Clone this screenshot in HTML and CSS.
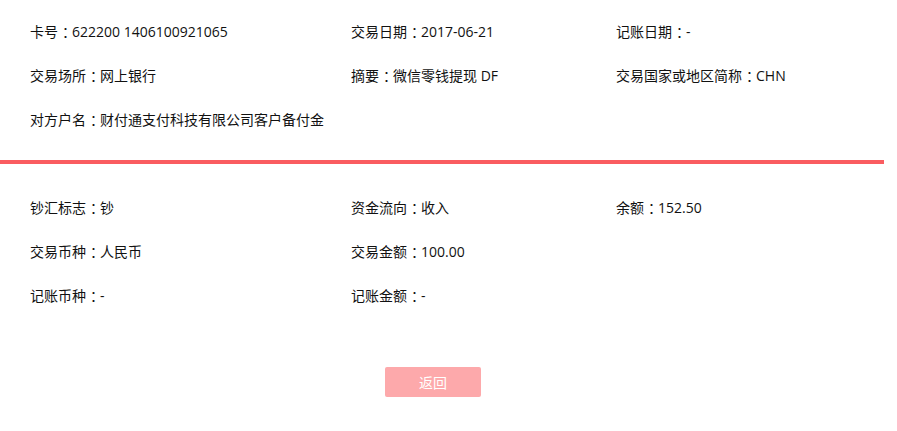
FILE: index.html
```html
<!DOCTYPE html>
<html lang="zh-CN">
<head>
<meta charset="utf-8">
<link rel="stylesheet" href="styles.css">
</head>
<body>
<div class="page">
  <div class="section top">
    <div class="grid">
      <div class="cell">卡号<span class="colon">：</span>622200 1406100921065</div>
      <div class="cell">交易日期<span class="colon">：</span>2017-06-21</div>
      <div class="cell">记账日期<span class="colon">：</span>-</div>
      <div class="cell">交易场所<span class="colon">：</span>网上银行</div>
      <div class="cell">摘要<span class="colon">：</span>微信零钱提现 DF</div>
      <div class="cell">交易国家或地区简称<span class="colon">：</span>CHN</div>
      <div class="cell wide">对方户名<span class="colon">：</span>财付通支付科技有限公司客户备付金</div>
    </div>
  </div>
  <div class="divider"></div>
  <div class="section bottom">
    <div class="grid">
      <div class="cell">钞汇标志<span class="colon">：</span>钞</div>
      <div class="cell">资金流向<span class="colon">：</span>收入</div>
      <div class="cell">余额<span class="colon">：</span>152.50</div>
      <div class="cell">交易币种<span class="colon">：</span>人民币</div>
      <div class="cell">交易金额<span class="colon">：</span>100.00</div>
      <div class="cell"></div>
      <div class="cell">记账币种<span class="colon">：</span>-</div>
      <div class="cell">记账金额<span class="colon">：</span>-</div>
      <div class="cell"></div>
    </div>
  </div>
  <div class="actions">
    <button class="btn-back" type="button">返回</button>
  </div>
</div>
</body>
</html>
```

FILE: styles.css
```css
html, body {
  margin: 0;
  padding: 0;
  background: #fff;
}
body {
  font-family: "Open Sans", "Noto Sans CJK SC", sans-serif;
  font-size: 14px;
  color: #111;
}
.page {
  width: 884px;
}
.section.top {
  padding: 9px 0 19px 30px;
}
.section.bottom {
  padding: 21px 0 0 30px;
}
.grid {
  display: grid;
  grid-template-columns: 321px 265px 1fr;
}
.cell {
  height: 44px;
  line-height: 44px;
  white-space: nowrap;
}
.cell.wide {
  grid-column: 1 / 4;
}
.colon {
  font-family: "Noto Sans CJK SC", sans-serif;
  margin-left: 4px;
  letter-spacing: -4px;
}
.divider {
  height: 4px;
  background: #fa5c60;
}
.actions {
  padding: 50px 0 0 385px;
}
.btn-back {
  display: block;
  width: 96px;
  height: 30px;
  border: none;
  border-radius: 2px;
  background: #fda9ab;
  color: #fff;
  font-family: "Noto Sans CJK SC", sans-serif;
  font-size: 14px;
  padding: 0;
  cursor: pointer;
}
```
